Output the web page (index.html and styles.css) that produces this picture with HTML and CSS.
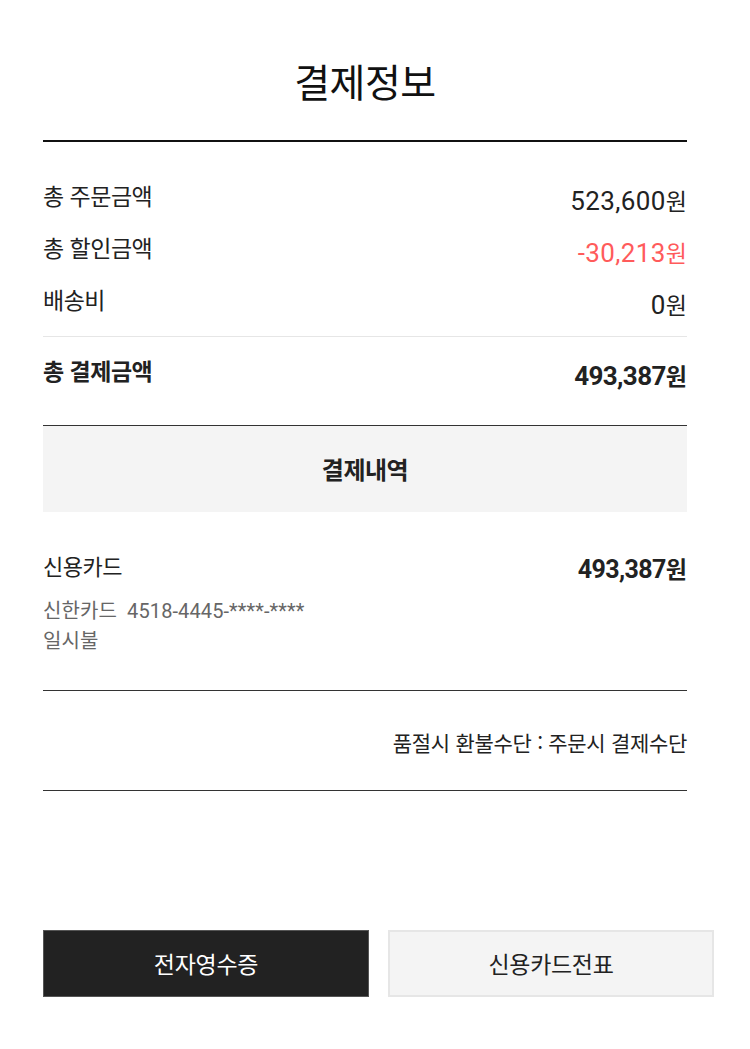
FILE: index.html
```html
<!DOCTYPE html>
<html lang="ko">
<head>
<meta charset="utf-8">
<title>결제정보</title>
<link rel="stylesheet" href="styles.css">
</head>
<body>
<div class="page">
  <header class="head">
    <h1 class="title">결제정보</h1>
  </header>

  <section class="summary">
    <div class="row">
      <span class="label">총 주문금액</span>
      <span class="amount"><span class="num">523,600</span><span class="won">원</span></span>
    </div>
    <div class="row">
      <span class="label">총 할인금액</span>
      <span class="amount discount"><span class="num">-30,213</span><span class="won">원</span></span>
    </div>
    <div class="row">
      <span class="label">배송비</span>
      <span class="amount"><span class="num">0</span><span class="won">원</span></span>
    </div>
  </section>

  <section class="total">
    <div class="row">
      <span class="label strong">총 결제금액</span>
      <span class="amount strong"><span class="num">493,387</span><span class="won">원</span></span>
    </div>
  </section>

  <section class="history">
    <h2 class="history-title">결제내역</h2>
    <div class="pay">
      <div class="row pay-row">
        <span class="label method">신용카드</span>
        <span class="amount strong small"><span class="num">493,387</span><span class="won">원</span></span>
      </div>
      <p class="detail">신한카드&nbsp;&nbsp;4518-4445-****-****</p>
      <p class="detail">일시불</p>
    </div>
  </section>

  <section class="refund">
    <p class="refund-text">품절시 환불수단 : 주문시 결제수단</p>
  </section>

  <div class="buttons">
    <button class="btn btn-dark" type="button">전자영수증</button>
    <button class="btn btn-light" type="button">신용카드전표</button>
  </div>
</div>
</body>
</html>
```

FILE: styles.css
```css
* { box-sizing: border-box; }

html, body {
  margin: 0;
  padding: 0;
  background: #fff;
}

body {
  font-family: Roboto, "Noto Sans CJK KR", sans-serif;
  color: #222;
}

.page {
  width: 644px;
  margin-left: 43px;
}

.head {
  padding-top: 56px;
  padding-bottom: 36px;
  border-bottom: 2px solid #111;
}

.title {
  margin: 0;
  font-family: "Noto Sans CJK KR", sans-serif;
  font-weight: 400;
  font-size: 39px;
  line-height: 48px;
  text-align: center;
  color: #111;
  letter-spacing: -0.5px;
}

.summary {
  display: flex;
  flex-direction: column;
  gap: 16px;
  padding-top: 40px;
  padding-bottom: 14px;
  border-bottom: 1px solid #e6e6e6;
}

.row {
  display: flex;
  justify-content: space-between;
  align-items: flex-start;
  height: 36px;
}

.label {
  font-family: "Noto Sans CJK KR", sans-serif;
  font-size: 23px;
  line-height: 26px;
  color: #222;
  letter-spacing: -0.5px;
}

.label.strong {
  font-weight: 700;
}

.label.method {
  font-size: 22px;
}

.amount {
  display: flex;
  align-items: baseline;
  height: 36px;
  line-height: 36px;
  color: #222;
  white-space: nowrap;
}

.amount .num {
  font-family: Roboto, sans-serif;
  font-size: 26px;
  letter-spacing: 0.4px;
}

.amount .won {
  font-family: "Noto Sans CJK KR", sans-serif;
  font-size: 23px;
}

.amount.discount {
  color: #ff5b5b;
}

.amount.strong .num {
  font-weight: 700;
  letter-spacing: -0.6px;
}

.amount.strong .won {
  font-weight: 700;
}

.total {
  padding-top: 20px;
  height: 89px;
  border-bottom: 1px solid #333;
}

.history-title {
  margin: 0;
  height: 86px;
  background: #f4f4f4;
  font-family: "Noto Sans CJK KR", sans-serif;
  font-size: 24px;
  font-weight: 700;
  line-height: 86px;
  text-align: center;
  color: #222;
  letter-spacing: -0.5px;
}

.pay {
  padding-top: 40px;
  padding-bottom: 34px;
  border-bottom: 1px solid #333;
}

.pay-row {
  height: 32px;
  margin-bottom: 12px;
}

.amount.small {
  height: 32px;
  line-height: 32px;
}

.amount.small .num {
  font-size: 25px;
}

.detail {
  margin: 0;
  font-family: Roboto, "Noto Sans CJK KR", sans-serif;
  font-size: 20px;
  line-height: 30px;
  color: #666;
  letter-spacing: 0.1px;
}

.refund {
  padding-top: 38px;
  padding-bottom: 35px;
  border-bottom: 1px solid #333;
}

.refund-text {
  margin: 0;
  font-family: "Noto Sans CJK KR", sans-serif;
  font-size: 21px;
  line-height: 26px;
  text-align: right;
  color: #222;
  letter-spacing: -0.3px;
}

.buttons {
  display: grid;
  grid-template-columns: 326px 326px;
  gap: 19px;
  width: 671px;
  margin-top: 139px;
}

.btn {
  height: 67px;
  font-family: "Noto Sans CJK KR", sans-serif;
  font-size: 23px;
  font-weight: 400;
  line-height: 1;
  cursor: pointer;
  padding: 0;
  letter-spacing: -0.3px;
}

.btn-dark {
  background: #222;
  color: #fff;
  border: 1px solid #555;
}

.btn-light {
  background: #f4f4f4;
  color: #222;
  border: 2px solid #e6e6e6;
}
```
